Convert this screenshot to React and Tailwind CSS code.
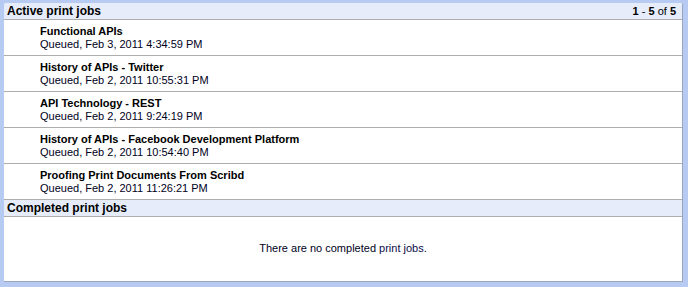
import React from 'react';

const jobs = [
  { title: 'Functional APIs', date: 'Queued, Feb 3, 2011 4:34:59 PM' },
  { title: 'History of APIs - Twitter', date: 'Queued, Feb 2, 2011 10:55:31 PM' },
  { title: 'API Technology - REST', date: 'Queued, Feb 2, 2011 9:24:19 PM' },
  { title: 'History of APIs - Facebook Development Platform', date: 'Queued, Feb 2, 2011 10:54:40 PM' },
  { title: 'Proofing Print Documents From Scribd', date: 'Queued, Feb 2, 2011 11:26:21 PM' },
];

export default function App() {
  return (
    <div
      className="w-[688px] h-[287px] bg-[#b6caf2] pl-[4px] pt-[3px] pr-[5px] pb-[5px]"
      style={{ fontFamily: '"Liberation Sans", Arial, sans-serif' }}
    >
      <div className="h-full bg-white rounded-tl-[3px] rounded-tr-[2px] border-r border-b border-[#9aa6bd] flex flex-col text-black">
        {/* Active jobs */}
        <div className="h-[17px] flex items-center justify-between bg-[#e6ecf9] border-b border-[#adadad] px-[3px] pr-[6px] rounded-t-[3px]">
          <span className="text-[12px] font-bold leading-none">Active print jobs</span>
          <span className="text-[11px] leading-none">
            <b>1</b> - <b>5</b> of <b>5</b>
          </span>
        </div>
        {jobs.map((j, i) => (
          <div key={i} className="h-[36px] border-b border-[#adadad] pl-[36px] pt-[5px]">
            <p className="text-[11px] font-bold leading-[13px]">{j.title}</p>
            <p className="text-[11px] leading-[13px] text-[#000022]">{j.date}</p>
          </div>
        ))}

        {/* Completed jobs */}
        <div className="h-[17px] flex items-center bg-[#e6ecf9] border-b border-[#adadad] px-[3px]">
          <span className="text-[12px] font-bold leading-none">Completed print jobs</span>
        </div>
        <div className="flex-1 flex justify-center pt-[25px]">
          <p className="text-[11px] leading-[13px] text-[#000022]">
            There are no completed <span className="text-[#0c0c48]">print jobs</span>.
          </p>
        </div>
      </div>
    </div>
  );
}
